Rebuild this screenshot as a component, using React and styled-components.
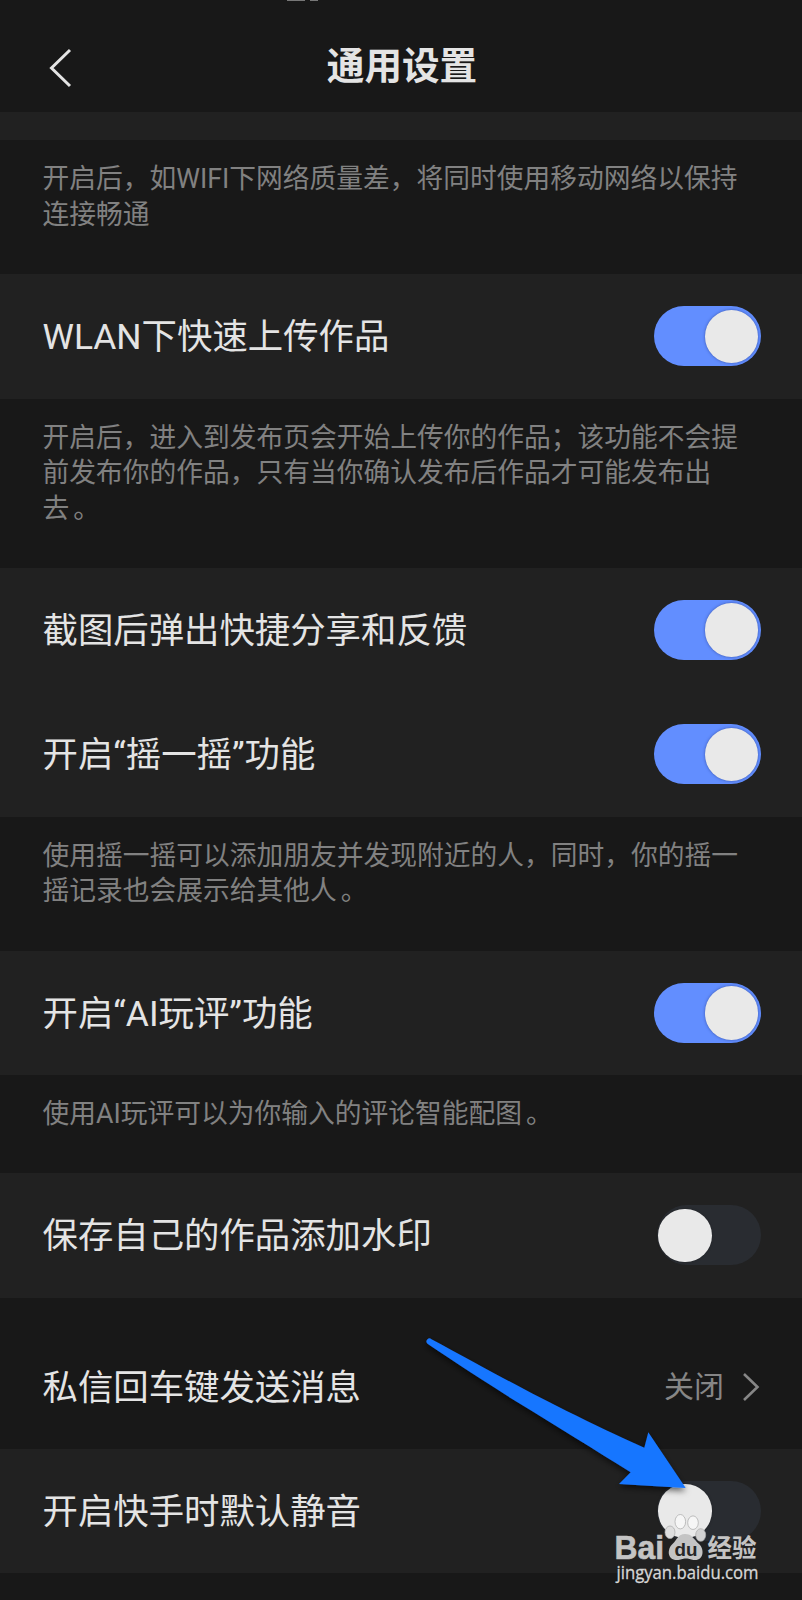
import React from "react";
import styled, { createGlobalStyle, css } from "styled-components";

const Global = createGlobalStyle`
  * { box-sizing: border-box; }
  body { margin: 0; background: #181818; }
`;

const Screen = styled.main`
  position: relative;
  width: 802px;
  height: 1600px;
  overflow: hidden;
  display: flex;
  flex-direction: column;
  background: #181818;
  color: #e4e4e4;
  font-family: Roboto, "Noto Sans CJK SC", sans-serif;
`;

const Header = styled.header`
  flex: none;
  height: 112px;
  padding: 24px 46px 0 48px;
  display: grid;
  grid-template-columns: 60px 1fr 60px;
  align-items: center;
`;

const BackIcon = styled.svg`
  width: 26px;
  height: 42px;
`;

const Title = styled.h1`
  margin: 0;
  padding-bottom: 5px;
  text-align: center;
  font-size: 37.6px;
  line-height: 44px;
  font-weight: 700;
`;

const StatusRemnant = styled.svg`
  position: absolute;
  left: 286px;
  top: 0;
  width: 34px;
  height: 2px;
`;

const Strip = styled.div`
  flex: none;
  height: 28px;
  background: #212121;
`;

const Note = styled.p`
  flex: none;
  margin: 0;
  height: ${(p) => p.$height}px;
  padding: 22px 60px 0 42.5px;
  font-size: 26.75px;
  line-height: 35.7px;
  color: #818181;
`;

const FullStop = styled.span`
  margin-left: 4px;
`;

const Row = styled.div`
  flex: none;
  height: ${(p) => p.$height || 124.5}px;
  padding: ${(p) => (p.$plain ? 28 : 0)}px 41px 0 42.5px;
  display: flex;
  align-items: center;
  justify-content: space-between;
  background: ${(p) => (p.$plain ? "transparent" : "#212121")};
`;

const Label = styled.span`
  padding-top: 2px;
  font-size: 35.4px;
  line-height: 50px;
  white-space: nowrap;
`;

const Value = styled.span`
  display: flex;
  align-items: center;
  gap: 18px;
  padding-right: 1px;
  color: #868686;
  font-size: 30px;
  line-height: 44px;
`;

const ChevronIcon = styled.svg`
  width: 18px;
  height: 30px;
`;

const Track = styled.span`
  height: 60px;
  border-radius: 30px;
  display: flex;
  align-items: center;
  ${(p) =>
    p.$on
      ? css`
          width: 107px;
          padding: 0 3px 0 0;
          justify-content: flex-end;
          background: #628eff;
        `
      : css`
          width: 104px;
          padding: 0 0 0 1px;
          background: #292c31;
        `}
`;

const Knob = styled.span`
  width: 53.5px;
  height: 53.5px;
  border-radius: 50%;
  background: #e9e9e9;
  box-shadow: 0 0 3px ${(p) => (p.$on ? "rgba(20, 30, 90, 0.5)" : "rgba(0, 0, 0, 0.2)")};
`;

const Arrow = styled.svg`
  position: absolute;
  left: 420px;
  top: 1330px;
  width: 280px;
  height: 175px;
`;

const Watermark = styled.svg`
  position: absolute;
  left: 605px;
  top: 1505px;
  width: 165px;
  height: 90px;
`;

function Switch({ on }) {
  return (
    <Track $on={on} role="switch" aria-checked={!!on}>
      <Knob $on={on} />
    </Track>
  );
}

function SwitchRow({ label, on }) {
  return (
    <Row>
      <Label>{label}</Label>
      <Switch on={on} />
    </Row>
  );
}

export default function App() {
  return (
    <Screen>
      <Global />
      <StatusRemnant viewBox="0 0 34 2">
        <path d="M1 0H19M24 0H32" stroke="#777" strokeWidth="2" />
      </StatusRemnant>
      <Header>
        <BackIcon viewBox="0 0 26 42" fill="none" stroke="#e4e4e4" strokeWidth="3">
          <path d="M22 3L3.500 21L22 39" />
        </BackIcon>
        <Title>通用设置</Title>
      </Header>
      <Strip />
      <Note $height={134}>
        开启后，如WIFI下网络质量差，将同时使用移动网络以保持连接畅通
      </Note>
      <SwitchRow label="WLAN下快速上传作品" on />
      <Note $height={169}>
        开启后，进入到发布页会开始上传你的作品；该功能不会提前发布你的作品，只有当你确认发布后作品才可能发布出
        <br />去<FullStop>。</FullStop>
      </Note>
      <SwitchRow label="截图后弹出快捷分享和反馈" on />
      <SwitchRow label="开启“摇一摇”功能" on />
      <Note $height={134}>
        使用摇一摇可以添加朋友并发现附近的人，同时，你的摇一摇记录也会展示给其他人<FullStop>。</FullStop>
      </Note>
      <SwitchRow label="开启“AI玩评”功能" on />
      <Note $height={98}>
        使用AI玩评可以为你输入的评论智能配图<FullStop>。</FullStop>
      </Note>
      <SwitchRow label="保存自己的作品添加水印" />
      <Row $plain $height={151}>
        <Label>私信回车键发送消息</Label>
        <Value>
          关闭
          <ChevronIcon viewBox="0 0 18 30" fill="none" stroke="#868686" strokeWidth="2.6">
            <path d="M2 2L15.500 15L2 28" />
          </ChevronIcon>
        </Value>
      </Row>
      <SwitchRow label="开启快手时默认静音" />

      <Arrow viewBox="420 1330 280 175">
        <defs>
          <filter id="arrowShadow" x="-10%" y="-10%" width="120%" height="125%">
            <feDropShadow dx="0" dy="3" stdDeviation="3" floodColor="#000" floodOpacity="0.6" />
          </filter>
        </defs>
        <path
          filter="url(#arrowShadow)"
          fill="#1976ff"
          d="M431.500 1339.300C470 1360 520 1388 566.700 1411C593 1424 620 1437 644.300 1447.700L648.300 1432.300L685.700 1488L619 1484L630.700 1472.300C595 1450 555 1425 516.700 1401.700C485 1382 455 1362 427.500 1343.800A3 3 0 0 1 431.500 1339.300Z"
        />
      </Arrow>

      <Watermark viewBox="605 1505 165 90">
        <g fill="#c4c4c4">
          <text x="614.500" y="1559" fontFamily="Liberation Sans" fontWeight="700" fontSize="32.500" textLength="49.500" lengthAdjust="spacingAndGlyphs" stroke="#c4c4c4" strokeWidth="0.600">Bai</text>
          <text x="707.500" y="1557" fontFamily="Noto Sans CJK SC" fontWeight="700" fontSize="24.500" textLength="49">经验</text>
          <text x="616.500" y="1578.500" fontFamily="Open Sans" fontSize="17.500" textLength="142" lengthAdjust="spacingAndGlyphs" fill="#d6d6d6" stroke="#d6d6d6" strokeWidth="0.300">jingyan.baidu.com</text>
          <g stroke="#a8a8a8" strokeWidth="0.700">
            <ellipse cx="680.300" cy="1521.700" rx="5.300" ry="7.200" fill="#f6f6f6" />
            <ellipse cx="693" cy="1522.700" rx="5.300" ry="6.800" fill="#f6f6f6" />
            <ellipse cx="670" cy="1532.300" rx="5" ry="6.300" fill="#dedede" />
            <ellipse cx="700.700" cy="1535" rx="5" ry="6.300" fill="#d2d2d2" />
          </g>
          <path d="M685 1534C678 1534 677 1540 672.500 1544C667 1549 667 1560 677 1560C681 1560 682 1558.500 686 1558.500C690 1558.500 691 1560 695 1560C704 1560 704.500 1549 699 1544C693.500 1539 692 1534 685 1534Z" />
        </g>
        <text x="674.500" y="1555.500" fontFamily="Liberation Sans" fontWeight="700" fontSize="18" textLength="23" lengthAdjust="spacingAndGlyphs" fill="#262626">du</text>
      </Watermark>
    </Screen>
  );
}
